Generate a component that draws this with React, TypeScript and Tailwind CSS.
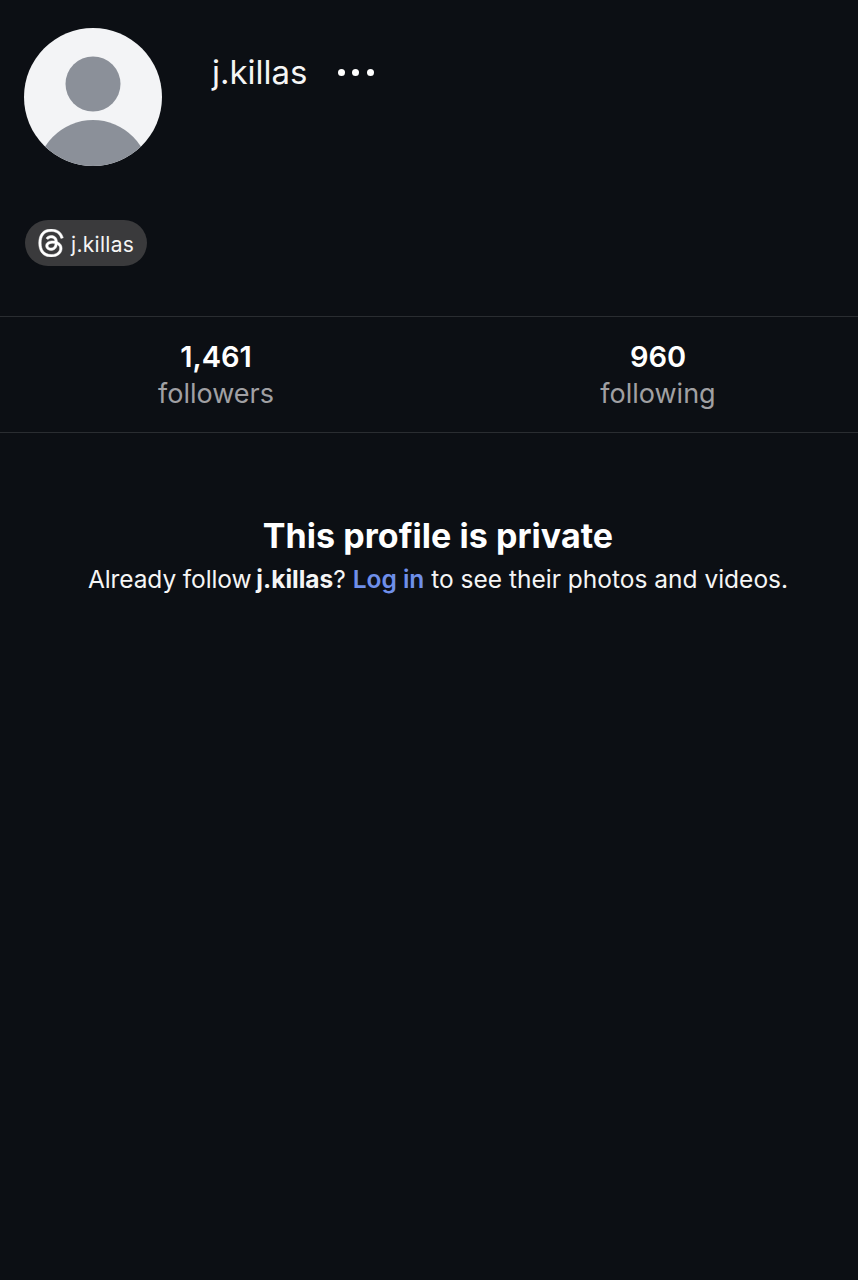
import { SiThreads } from "react-icons/si"

function Avatar() {
  return (
    <svg width="138" height="138" viewBox="0 0 138 138" className="shrink-0">
      <defs>
        <clipPath id="avatarClip">
          <circle cx="69" cy="69" r="69" />
        </clipPath>
      </defs>
      <circle cx="69" cy="69" r="69" fill="#f3f4f6" />
      <g clipPath="url(#avatarClip)">
        <circle cx="69" cy="56" r="27.5" fill="#8b9099" />
        <ellipse cx="69" cy="150" rx="57" ry="58" fill="#8b9099" />
      </g>
    </svg>
  )
}

function Stat({ value, label }: { value: string; label: string }) {
  return (
    <div className="flex flex-col items-center">
      <span className="text-[29px] leading-[36px] font-semibold text-white">{value}</span>
      <span className="text-[27px] leading-[36px] mt-[1px] text-[#a0a0a3]">{label}</span>
    </div>
  )
}

export default function App() {
  return (
    <div className="w-full min-h-[1280px] bg-[#0c0f14] text-white font-['Inter',sans-serif]">
      <div className="flex pt-[28px] pl-[24px]">
        <Avatar />
        <div className="flex items-center h-[88px] ml-[50px] gap-[30px]">
          <span className="text-[33px] leading-[40px] text-[#f5f5f5]">j.killas</span>
          <div className="flex items-center gap-[7.5px]">
            <span className="w-[7px] h-[7px] rounded-full bg-white" />
            <span className="w-[7px] h-[7px] rounded-full bg-white" />
            <span className="w-[7px] h-[7px] rounded-full bg-white" />
          </div>
        </div>
      </div>

      <div className="pl-[25px] mt-[54px]">
        <div className="inline-flex items-center h-[46px] w-[122px] rounded-full bg-[#3a3a3c] pl-[12px] gap-[6px]">
          <SiThreads className="w-[28px] h-[28px] text-white stroke-white stroke-[0.4px]" />
          <span className="text-[21px] leading-[26px] tracking-[0.3px] text-[#f5f5f5] mt-[3px]">j.killas</span>
        </div>
      </div>

      <div className="mt-[50px] grid grid-cols-[432px_1fr] gap-[26px] border-y border-[#2a2d31] h-[117px] pt-[22px]">
        <Stat value="1,461" label="followers" />
        <Stat value="960" label="following" />
      </div>

      <div className="flex flex-col items-center pl-[18px] pt-[80px]">
        <h2 className="text-[34px] leading-[46px] tracking-[0.05px] font-bold text-white">This profile is private</h2>
        <p className="text-[24.5px] leading-[36px] text-[#f5f5f5] mt-[2px]">
          <span className="tracking-[-0.1px]">Already follow</span>{" "}
          <span className="font-bold ml-[-2px]">j.killas</span>?{" "}
          <span className="font-semibold text-[#6f8fea]">Log in</span> to see their photos and videos.
        </p>
      </div>
    </div>
  )
}
